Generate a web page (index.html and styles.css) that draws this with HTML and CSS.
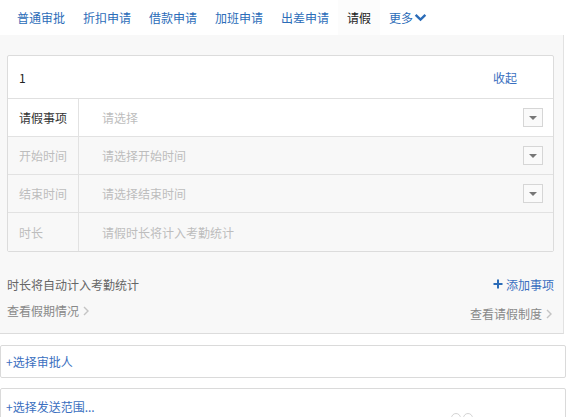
FILE: index.html
```html
<!DOCTYPE html>
<html lang="zh">
<head>
<meta charset="utf-8">
<link rel="stylesheet" href="styles.css">
</head>
<body>
<nav class="tabs">
  <a class="tab">普通审批</a>
  <a class="tab">折扣申请</a>
  <a class="tab">借款申请</a>
  <a class="tab">加班申请</a>
  <a class="tab">出差申请</a>
  <a class="tab active">请假</a>
  <a class="tab more">更多<svg class="chev" viewBox="0 0 12 8" width="12" height="8"><path d="M1.5 1.5 L6 6 L10.5 1.5" fill="none" stroke="#2b6cb8" stroke-width="2.2"/></svg></a>
</nav>
<section class="panel">
  <div class="card">
    <div class="card-head">
      <span class="num">1</span>
      <a class="fold">收起</a>
    </div>
    <div class="row">
      <div class="label">请假事项</div>
      <div class="value"><span class="ph">请选择</span><span class="drop"><i></i></span></div>
    </div>
    <div class="row disabled">
      <div class="label">开始时间</div>
      <div class="value"><span class="ph">请选择开始时间</span><span class="drop"><i></i></span></div>
    </div>
    <div class="row disabled">
      <div class="label">结束时间</div>
      <div class="value"><span class="ph">请选择结束时间</span><span class="drop"><i></i></span></div>
    </div>
    <div class="row disabled">
      <div class="label">时长</div>
      <div class="value"><span class="ph">请假时长将计入考勤统计</span></div>
    </div>
  </div>
  <div class="info">
    <div class="info-line">
      <span class="note">时长将自动计入考勤统计</span>
      <a class="add"><svg viewBox="0 0 10 10" width="10" height="10"><path d="M5 0.5 V9.5 M0.5 5 H9.5" stroke="#2b6cb8" stroke-width="2"/></svg>添加事项</a>
    </div>
    <div class="info-line links">
      <a class="gray-link">查看假期情况<svg class="arr" viewBox="0 0 6 10" width="6" height="10"><path d="M1 1 L5 5 L1 9" fill="none" stroke="#c4c4c4" stroke-width="1.4"/></svg></a>
      <a class="gray-link low">查看请假制度<svg class="arr" viewBox="0 0 6 10" width="6" height="10"><path d="M1 1 L5 5 L1 9" fill="none" stroke="#c4c4c4" stroke-width="1.4"/></svg></a>
    </div>
  </div>
</section>
<div class="box"><a class="pick">+选择审批人</a></div>
<div class="box last"><a class="pick">+选择发送范围...</a><span class="dots"><i></i><i></i></span></div>
</body>
</html>
```
FILE: styles.css
```css
* { box-sizing: border-box; }
html, body { margin: 0; padding: 0; }
body {
  width: 569px;
  height: 417px;
  overflow: hidden;
  background: #fff;
  font-family: "Noto Sans CJK SC", "Noto Sans", sans-serif;
  font-size: 12px;
  color: #333;
}
a { text-decoration: none; cursor: pointer; }

.tabs {
  height: 35px;
  display: flex;
  align-items: stretch;
  padding-left: 8px;
  background: #fff;
}
.tab {
  display: flex;
  align-items: center;
  padding: 0 9px;
  color: #2b6cb8;
  font-size: 12px;
}
.tab.active { color: #222; background: #fcfcfc; }
.tab.more .chev { margin-left: 1px; width: 13px; height: 9px; }

.panel {
  width: 564px;
  height: 299px;
  background: #f8f8f8;
  border-right: 1px solid #e2e2e2;
  border-bottom: 1px solid #dcdcdc;
  padding: 20px 9px 0 7px;
}
.card {
  background: #fff;
  border: 1px solid #dcdcdc;
  border-radius: 2px;
}
.card-head {
  height: 43px;
  display: flex;
  align-items: center;
  justify-content: space-between;
  padding: 0 36px 0 11px;
  border-bottom: 1px solid #e0e0e0;
}
.num { color: #222; font-size: 12px; }
.fold { color: #3a6fc0; font-size: 12px; }

.row {
  display: flex;
  height: 38px;
  border-bottom: 1px solid #e2e2e2;
}
.row:last-child { border-bottom: none; height: 38px; }
.label {
  width: 71px;
  border-right: 1px solid #e2e2e2;
  display: flex;
  align-items: center;
  padding-left: 11px;
  color: #333;
}
.value {
  flex: 1;
  display: flex;
  align-items: center;
  justify-content: space-between;
  padding: 0 10px 0 23px;
}
.ph { color: #bdbdbd; }
.row.disabled { background: #f8f8f8; }
.row.disabled .label { color: #bdbdbd; }
.drop {
  width: 20px;
  height: 19px;
  border: 1px solid #d6d6d6;
  background: #fafafa;
  display: flex;
  align-items: center;
  justify-content: center;
}
.drop i {
  width: 0; height: 0;
  border-left: 4px solid transparent;
  border-right: 4px solid transparent;
  border-top: 4px solid #777;
}

.info { padding-top: 24px; }
.info-line {
  display: flex;
  justify-content: space-between;
  align-items: center;
  height: 16px;
}
.note { color: #666; }
.add { color: #3a6fc0; display: flex; align-items: center; gap: 3px; }
.links { margin-top: 10px; align-items: flex-start; height: 20px; }
.gray-link { color: #888; display: flex; align-items: center; gap: 4px; }
.gray-link.low { margin-top: 3px; margin-right: 2px; }

.box {
  width: 566px;
  height: 33px;
  margin-top: 11px;
  border: 1px solid #dadada;
  border-radius: 2px;
  display: flex;
  align-items: center;
  padding-left: 5px;
}
.box.last { height: 40px; margin-top: 10px; align-items: flex-start; padding-top: 9px; position: relative; }
.pick { color: #3a6fc0; }
.dots { position: absolute; left: 450px; top: 24px; display: flex; gap: 2px; }
.dots i { width: 10px; height: 10px; border: 1px solid #d4d4d4; border-radius: 50%; }
```
